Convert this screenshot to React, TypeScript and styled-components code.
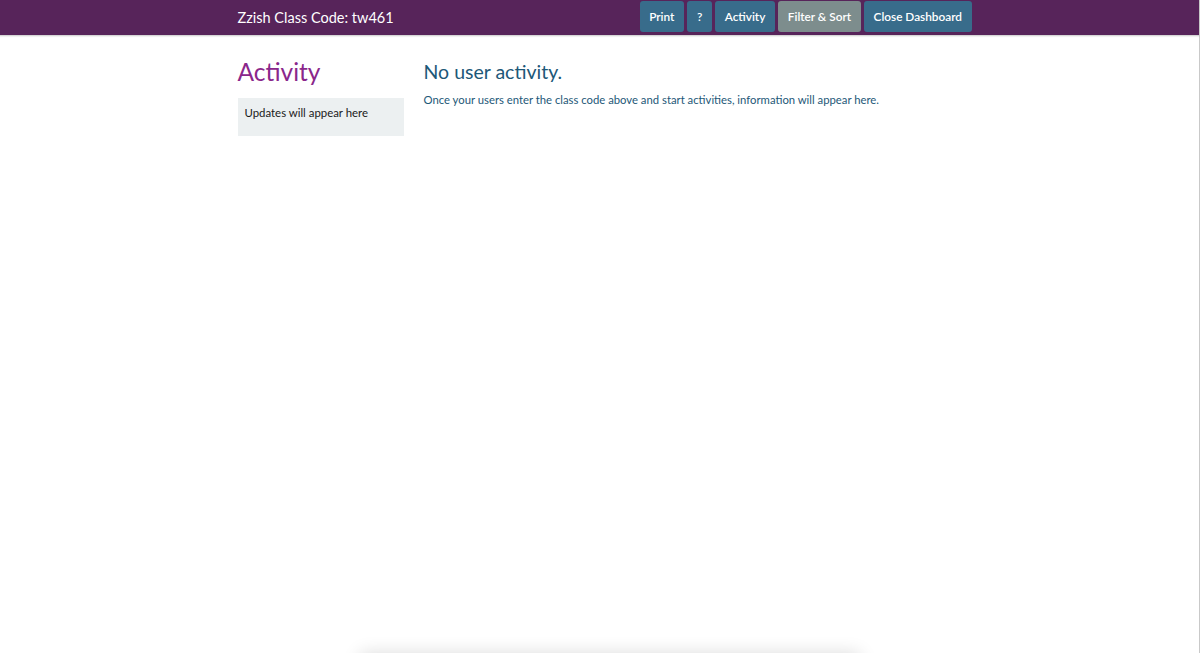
import React from 'react';
import styled, { createGlobalStyle } from 'styled-components';

const GlobalStyle = createGlobalStyle`
  html, body {
    margin: 0;
    padding: 0;
    background: #ffffff;
    font-family: Lato, "Open Sans", "Liberation Sans", sans-serif;
  }
`;

const Page = styled.div`
  min-height: 100vh;
  box-sizing: border-box;
  border-right: 1px solid #c9c9c9;
`;

const Header = styled.header`
  height: 35px;
  background: #57245a;
  border-bottom: 1px solid #d6d6d6;
  box-shadow: 0 1px 1px rgba(0, 0, 0, 0.06);
`;

const Container = styled.div`
  width: 734px;
  margin-left: calc(50% - 362px);
`;

const HeaderInner = styled(Container)`
  display: flex;
  align-items: flex-start;
  justify-content: space-between;
  height: 100%;
`;

const Title = styled.div`
  color: #ffffff;
  font-size: 14.5px;
  line-height: 35px;
`;

const Buttons = styled.nav`
  display: flex;
  gap: 3.5px;
  padding-top: 1px;
`;

const Button = styled.button<{ $muted?: boolean }>`
  height: 31px;
  padding: 0 9.5px;
  border: none;
  border-radius: 3px;
  background: ${(p) => (p.$muted ? '#7d8d8d' : '#386c8b')};
  color: #ffffff;
  font-family: inherit;
  font-size: 11.8px;
  font-weight: 600;
  cursor: pointer;
`;

const Body = styled(Container)`
  display: flex;
  gap: 20px;
  padding-top: 20px;
`;

const Sidebar = styled.aside`
  width: 166px;
  flex-shrink: 0;
`;

const SideHeading = styled.h1`
  margin: 0 0 10px;
  color: #8a278b;
  font-size: 24.5px;
  font-weight: 400;
  line-height: 32px;
`;

const Updates = styled.div`
  background: #ecf0f1;
  color: #1a1a1a;
  font-size: 11.4px;
  line-height: 14px;
  height: 38px;
  box-sizing: border-box;
  padding: 8px 7px;
`;

const Main = styled.main`
  flex: 1;
  color: #1d5878;
`;

const MainHeading = styled.h2`
  margin: 0 0 8px;
  font-size: 19.5px;
  font-weight: 400;
  line-height: 26px;
  padding-top: 3px;
`;

const Note = styled.p`
  margin: 0;
  font-size: 11.3px;
  line-height: 14px;
`;

const FooterShade = styled.div`
  position: fixed;
  left: 360px;
  width: 500px;
  bottom: -40px;
  height: 40px;
  box-shadow: 0 0 18px rgba(0, 0, 0, 0.14);
`;

const App = (): JSX.Element => (
  <>
    <GlobalStyle />
    <Page>
      <Header>
        <HeaderInner>
          <Title>Zzish Class Code: tw461</Title>
          <Buttons>
            <Button>Print</Button>
            <Button>?</Button>
            <Button>Activity</Button>
            <Button $muted>Filter &amp; Sort</Button>
            <Button>Close Dashboard</Button>
          </Buttons>
        </HeaderInner>
      </Header>
      <Body>
        <Sidebar>
          <SideHeading>Activity</SideHeading>
          <Updates>Updates will appear here</Updates>
        </Sidebar>
        <Main>
          <MainHeading>No user activity.</MainHeading>
          <Note>
            Once your users enter the class code above and start activities, information will appear here.
          </Note>
        </Main>
      </Body>
      <FooterShade />
    </Page>
  </>
);

export default App;
